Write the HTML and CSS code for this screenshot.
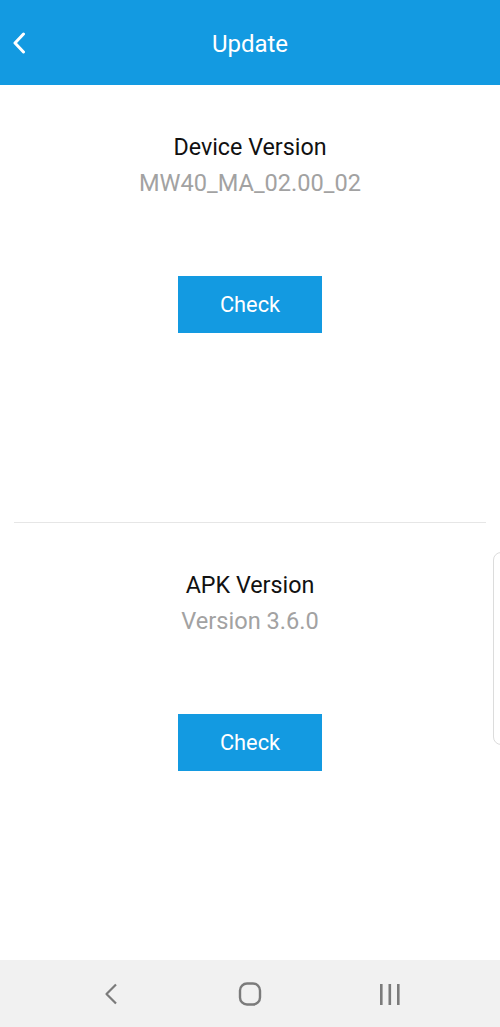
FILE: index.html
```html
<!DOCTYPE html>
<html>
<head>
<meta charset="utf-8">
<link rel="stylesheet" href="styles.css">
</head>
<body>
<div class="screen">
  <header class="appbar">
    <svg class="appbar-back" width="14" height="22" viewBox="0 0 14 22"><path d="M11.5 2 L3 11 L11.5 20" fill="none" stroke="#fff" stroke-width="3" stroke-linecap="round" stroke-linejoin="round"/></svg>
    <h1 class="appbar-title">Update</h1>
  </header>
  <main class="content">
    <section class="version-block">
      <div class="version-title">Device Version</div>
      <div class="version-value">MW40_MA_02.00_02</div>
      <button class="check-btn">Check</button>
    </section>
    <div class="divider"></div>
    <section class="version-block">
      <div class="version-title">APK Version</div>
      <div class="version-value">Version 3.6.0</div>
      <button class="check-btn">Check</button>
    </section>
  </main>
  <nav class="navbar">
    <svg class="nav-icon" width="24" height="24" viewBox="0 0 24 24"><path d="M17 2.5 L7.5 12 L17 21.5" fill="none" stroke="#7b7b7b" stroke-width="2.2" stroke-linejoin="round"/></svg>
    <svg class="nav-icon" width="24" height="24" viewBox="0 0 24 24"><rect x="2" y="1.5" width="20" height="21" rx="7" fill="none" stroke="#7b7b7b" stroke-width="2.4"/></svg>
    <svg class="nav-icon" width="24" height="24" viewBox="0 0 24 24"><rect x="3" y="2" width="2.6" height="21" fill="#7b7b7b"/><rect x="11.5" y="2" width="2.6" height="21" fill="#7b7b7b"/><rect x="20" y="2" width="2.6" height="21" fill="#7b7b7b"/></svg>
  </nav>
  <div class="edge-handle"></div>
</div>
</body>
</html>
```
FILE: styles.css
```css
* { box-sizing: border-box; }
html, body { margin: 0; padding: 0; }
body {
  font-family: Roboto, "Liberation Sans", sans-serif;
  background: #fff;
}
.screen {
  position: relative;
  width: 500px;
  height: 1027px;
  display: flex;
  flex-direction: column;
  overflow: hidden;
}
.appbar {
  position: relative;
  height: 85px;
  background: #139ae1;
  display: flex;
  align-items: center;
  justify-content: center;
  flex-shrink: 0;
}
.appbar-back {
  position: absolute;
  left: 12px;
  top: 32px;
}
.appbar-title {
  margin: 0;
  color: #fff;
  font-size: 24px;
  font-weight: 400;
  line-height: 1;
  padding-top: 2px;
}
.content {
  flex: 1;
  display: flex;
  flex-direction: column;
}
.version-block {
  height: 437px;
  display: flex;
  flex-direction: column;
  align-items: center;
  padding-top: 44px;
}
.version-title {
  font-size: 23.3px;
  line-height: 36px;
  color: #111;
}
.version-value {
  font-size: 23.6px;
  line-height: 36px;
  color: #a2a2a2;
}
.check-btn {
  margin-top: 75px;
  width: 144px;
  height: 57px;
  border: none;
  background: #139ae1;
  color: #fff;
  font-family: Roboto, "Liberation Sans", sans-serif;
  font-size: 21.8px;
  padding: 0;
}
.divider {
  height: 1px;
  margin: 0 14px;
  background: #e6e6e6;
}
.navbar {
  height: 67px;
  background: #f1f1f1;
  display: flex;
  align-items: center;
  justify-content: center;
  gap: 115px;
  flex-shrink: 0;
}
.edge-handle {
  position: absolute;
  left: 493px;
  top: 552px;
  width: 20px;
  height: 193px;
  border: 1px solid #dcdcdc;
  border-radius: 8px;
  background: #fff;
}
```
